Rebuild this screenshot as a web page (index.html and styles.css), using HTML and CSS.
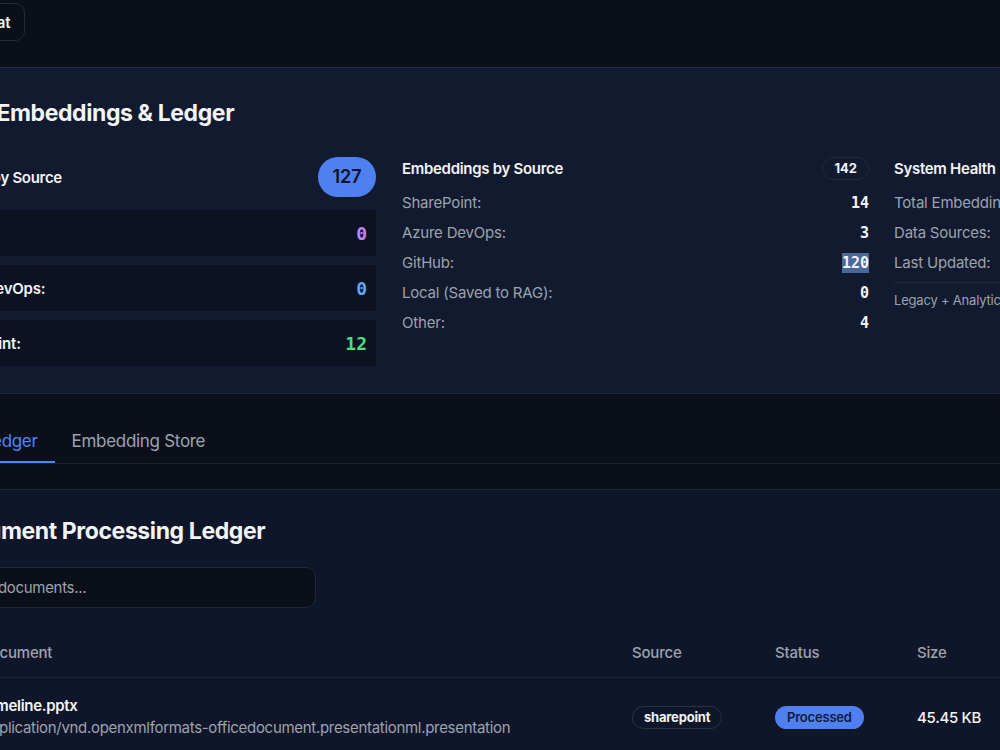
FILE: index.html
```html
<!DOCTYPE html>
<html lang="en">
<head>
    <meta charset="UTF-8">
    <meta name="viewport" content="width=device-width, initial-scale=1.0">
    <title>RAG Embeddings &amp; Ledger</title>
    <link rel="stylesheet" href="styles.css">
</head>
<body>
    <header class="topbar">
        <div class="page">
            <button class="chat-btn">
                <svg width="16" height="16" viewBox="0 0 24 24" fill="none" stroke="currentColor" stroke-width="2" stroke-linecap="round" stroke-linejoin="round"><path d="M21 15a2 2 0 0 1-2 2H7l-4 4V5a2 2 0 0 1 2-2h14a2 2 0 0 1 2 2z"/></svg>
                Chat
            </button>
        </div>
    </header>

    <section class="stats">
        <div class="page">
            <h2 class="panel-title">RAG Embeddings &amp; Ledger</h2>

            <div class="stats-grid">
                <!-- ledger counts -->
                <div class="col">
                    <div class="card-head">
                        <h3>Ledger by Source</h3>
                        <span class="total-pill">127</span>
                    </div>
                    <div class="source-row"><span>GitHub:</span><span class="num purple">0</span></div>
                    <div class="source-row"><span>Azure DevOps:</span><span class="num blue">0</span></div>
                    <div class="source-row"><span>SharePoint:</span><span class="num green">12</span></div>
                </div>

                <!-- embedding counts -->
                <div class="col">
                    <div class="list-head">
                        <h3>Embeddings by Source</h3>
                        <span class="outline-pill">142</span>
                    </div>
                    <div class="stat-line"><span>SharePoint:</span><span class="val">14</span></div>
                    <div class="stat-line"><span>Azure DevOps:</span><span class="val">3</span></div>
                    <div class="stat-line"><span>GitHub:</span><span class="val"><span class="sel">120</span></span></div>
                    <div class="stat-line"><span>Local (Saved to RAG):</span><span class="val">0</span></div>
                    <div class="stat-line"><span>Other:</span><span class="val">4</span></div>
                </div>

                <!-- health -->
                <div class="col">
                    <div class="list-head">
                        <h3>System Health</h3>
                    </div>
                    <div class="stat-line"><span>Total Embeddings:</span><span class="val">142</span></div>
                    <div class="stat-line"><span>Data Sources:</span><span class="val">4</span></div>
                    <div class="stat-line"><span>Last Updated:</span><span class="val">12:04:31</span></div>
                    <div class="health-note">Legacy + Analytics store combined</div>
                </div>
            </div>
        </div>
    </section>

    <nav class="tabs">
        <div class="tab-bar">
            <a class="tab active">Document Ledger</a>
            <a class="tab">Embedding Store</a>
        </div>
    </nav>

    <section class="ledger">
        <div class="page">
            <h2 class="panel-title">Document Processing Ledger</h2>
            <input class="search" type="text" placeholder="Search documents...">

            <table class="doc-table">
                <thead>
                    <tr>
                        <th class="c-doc">Document</th>
                        <th class="c-src">Source</th>
                        <th class="c-status">Status</th>
                        <th>Size</th>
                    </tr>
                </thead>
                <tbody>
                    <tr>
                        <td class="c-doc">
                            <div class="doc-name">Timeline.pptx</div>
                            <div class="doc-type">application/vnd.openxmlformats-officedocument.presentationml.presentation</div>
                        </td>
                        <td><span class="src-pill">sharepoint</span></td>
                        <td><span class="status-pill">Processed</span></td>
                        <td class="size">45.45 KB</td>
                    </tr>
                </tbody>
            </table>
        </div>
    </section>
</body>
</html>
```

FILE: styles.css
```css
html, body {
    overflow-x: hidden;
}
body {
    margin: 0;
    background-color: #0b0f1a;
    color: #f3f4f6;
    font-family: Inter, "Noto Sans", sans-serif;
    letter-spacing: -0.2px;
}
.page {
    margin-left: -71px;
    width: 1432px;
}
.topbar {
    height: 68px;
    box-sizing: border-box;
    padding-top: 3px;
    border-bottom: 1px solid #1f2c55;
}
.chat-btn {
    display: flex;
    align-items: center;
    gap: 8px;
    height: 38px;
    margin-left: 9px;
    padding: 0 14px;
    background: #0b0f1a;
    color: #f3f4f6;
    border: 1px solid #232a3a;
    border-radius: 10px;
    font-family: inherit;
    font-size: 15px;
    font-weight: 600;
    letter-spacing: -0.2px;
}

/* stats panel */
.stats {
    background-color: #111a2e;
    padding: 28px 0 27px;
    border-bottom: 1px solid #1c2745;
}
.panel-title {
    margin: 0 0 27px;
    padding-left: 15px;
    font-size: 23px;
    line-height: 34px;
    font-weight: 700;
    letter-spacing: -0.4px;
}
.stats-grid {
    display: grid;
    grid-template-columns: 447px 467px 467px;
    column-gap: 26px;
}
.stats-grid .col + .col + .col {
    margin-left: -1px;
}
h3 {
    margin: 0;
    font-size: 15px;
    font-weight: 600;
    letter-spacing: -0.3px;
}
.card-head {
    display: flex;
    justify-content: space-between;
    align-items: center;
    height: 40px;
    padding-left: 10px;
    margin-bottom: 13px;
}
.total-pill {
    width: 58px;
    height: 40px;
    line-height: 40px;
    text-align: center;
    border-radius: 20px;
    background-color: #4f80f0;
    color: #0b1429;
    font-size: 18px;
    font-weight: 600;
    letter-spacing: 0;
}
.source-row {
    display: flex;
    justify-content: space-between;
    align-items: center;
    height: 46px;
    padding: 0 9px 0 10px;
    margin-bottom: 9px;
    background-color: #0c1221;
    font-size: 15px;
    font-weight: 600;
}
.source-row:last-child {
    margin-bottom: 0;
}
.num {
    font-family: "DejaVu Sans Mono", "Liberation Mono", monospace;
    font-size: 18px;
    font-weight: 700;
    letter-spacing: 0;
}
.purple { color: #c084fc; }
.blue { color: #60a5fa; }
.green { color: #4ade80; }

.list-head {
    display: flex;
    justify-content: space-between;
    align-items: center;
    height: 23px;
    margin-bottom: 8px;
}
.outline-pill {
    height: 21px;
    line-height: 21px;
    padding: 0 11px;
    border: 1px solid #1f2a40;
    border-radius: 12px;
    font-size: 13px;
    font-weight: 700;
    letter-spacing: 0;
}
.stat-line {
    display: flex;
    justify-content: space-between;
    align-items: center;
    height: 30px;
    line-height: 30px;
    font-size: 15px;
    color: #9ca3af;
}
.val {
    color: #f3f4f6;
    font-family: "DejaVu Sans Mono", "Liberation Mono", monospace;
    font-size: 15px;
    font-weight: 700;
    letter-spacing: 0;
}
.sel {
    display: inline-block;
    line-height: 20px;
    background-color: #4a6898;
}
.health-note {
    margin-top: 4px;
    padding-top: 8px;
    border-top: 1px solid #1f2a40;
    font-size: 13px;
    line-height: 18px;
    color: #9ca3af;
}

/* tabs */
.tabs {
    padding-top: 24px;
    margin-bottom: 25px;
    border-bottom: 1px solid #1a2030;
}
.tab-bar {
    display: flex;
    margin-left: -119px;
}
.tab {
    padding: 11px 17px 8px;
    line-height: 24px;
    font-size: 17px;
    letter-spacing: -0.3px;
    color: #9ca3af;
    border-bottom: 2px solid transparent;
}
.tab.active {
    color: #4f86f7;
    border-bottom-color: #4f86f7;
}

/* ledger */
.ledger {
    background-color: #10162a;
    border-top: 1px solid #1c2436;
    padding-top: 24px;
    min-height: 300px;
}
.ledger .panel-title {
    margin-bottom: 19px;
}
.search {
    display: block;
    width: 387px;
    height: 41px;
    box-sizing: border-box;
    padding: 0 14px 0 16px;
    background-color: #0b0f1a;
    border: 1px solid #1f2738;
    border-radius: 10px;
    color: #f3f4f6;
    font-family: inherit;
    font-size: 15px;
    letter-spacing: -0.3px;
}
.search::placeholder {
    color: #9ca3af;
}
.doc-table {
    margin-top: 21px;
    width: 1300px;
    border-collapse: collapse;
}
.doc-table th {
    padding: 12px 16px;
    line-height: 24px;
    text-align: left;
    font-size: 15px;
    font-weight: 500;
    color: #9ca3af;
    border-bottom: 1px solid #1c2436;
}
.doc-table td {
    padding: 17px 16px;
    font-size: 15px;
    vertical-align: middle;
}
.doc-table .c-doc {
    width: 618px;
    padding-left: 53px;
}
.doc-table th.c-doc {
    padding-left: 51px;
}
.c-src { width: 111px; }
.c-status { width: 110px; }
.doc-name {
    line-height: 22px;
    font-weight: 600;
    letter-spacing: -0.3px;
}
.doc-type {
    line-height: 22px;
    color: #9ca3af;
    letter-spacing: -0.3px;
}
.src-pill {
    display: inline-block;
    height: 21px;
    line-height: 21px;
    padding: 0 11px;
    border: 1px solid #283145;
    border-radius: 12px;
    font-size: 13px;
    font-weight: 700;
}
.status-pill {
    display: inline-block;
    height: 23px;
    line-height: 23px;
    padding: 0 12px;
    border-radius: 12px;
    background-color: #4f80f0;
    color: #0f1b3d;
    font-size: 13px;
    font-weight: 600;
}
.size {
    font-weight: 500;
    letter-spacing: -0.3px;
}
```
